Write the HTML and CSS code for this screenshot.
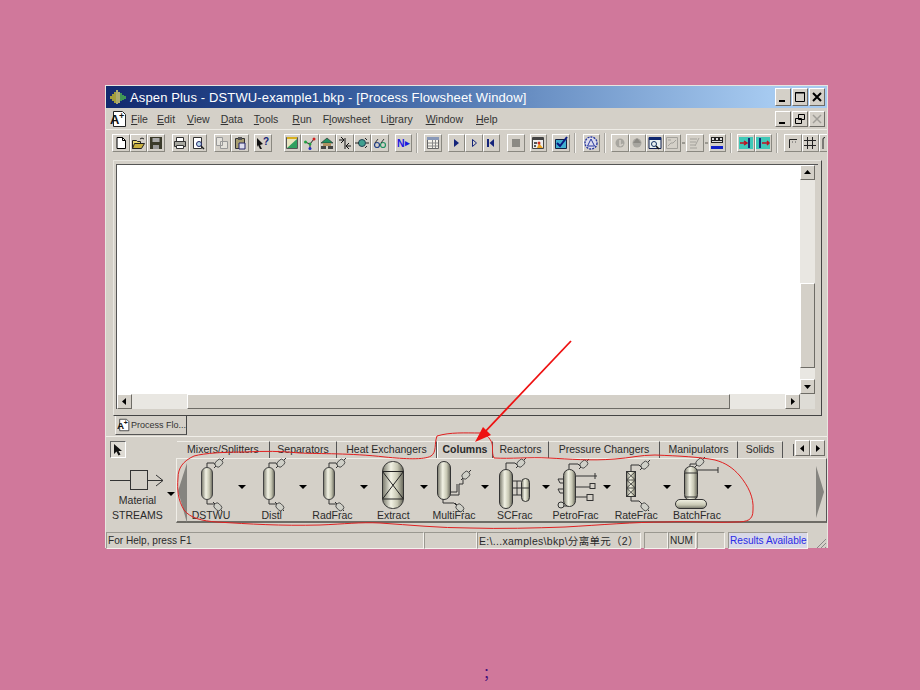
FILE: index.html
```html
<!DOCTYPE html>
<html lang="en">
<head>
<meta charset="utf-8">
<title>Aspen Plus</title>
<link rel="stylesheet" href="styles.css">
</head>
<body>
<svg class="sprite" aria-hidden="true">
  <defs>
    <linearGradient id="metal" x1="0" x2="1" y1="0" y2="0">
      <stop offset="0" stop-color="#77776a"/>
      <stop offset=".4" stop-color="#f2f2e4"/>
      <stop offset=".7" stop-color="#c8c8b4"/>
      <stop offset="1" stop-color="#66665a"/>
    </linearGradient>
    <linearGradient id="metalV" x1="0" x2="0" y1="0" y2="1">
      <stop offset="0" stop-color="#f2f2e4"/>
      <stop offset=".6" stop-color="#c8c8b4"/>
      <stop offset="1" stop-color="#77776a"/>
    </linearGradient>
    <g id="nozUp"><path d="M-2 2L8 -8" class="pipe"/><rect x="0" y="-3" width="8" height="6" rx="2.500" transform="rotate(-45)" fill="#d0d0c8" stroke="#444" stroke-width=".9"/></g>
    <g id="nozDown"><path d="M-2 -2L7 7" class="pipe"/><rect x="0" y="-3" width="8" height="6" rx="2.500" transform="rotate(45)" fill="#d0d0c8" stroke="#444" stroke-width=".9"/></g>
    <g id="column">
      <path d="M18 9V4H25L27 7M18 40V45H25L27 46" class="pipe"/>
      <rect x="12.500" y="8.500" width="11" height="32" rx="5.500" fill="url(#metal)" stroke="#444"/>
      <use href="#nozUp" x="27" y="7"/>
      <use href="#nozDown" x="26" y="45"/>
    </g>
    <path id="caret" d="M0 0H8L4 4Z" fill="#000"/>
  </defs>
</svg>

<main class="window">
  <header class="titlebar">
    <svg class="app-icon" width="16" height="16" viewBox="0 0 16 16"><path d="M1 7v3M3 5v7M5 3v11" stroke="#f0dc20" stroke-width="1.300"/><path d="M7 1v14M9 3v11" stroke="#fff070" stroke-width="1.300"/><path d="M11 4v8M13 6v5M15 7v3" stroke="#58d048" stroke-width="1.300"/></svg>
    <span class="title-text">Aspen Plus - DSTWU-example1.bkp - [Process Flowsheet Window]</span>
    <div class="win-btns">
      <span class="win-btn"><svg width="14" height="14" viewBox="0 0 14 14"><path d="M3 11h6" stroke="#000" stroke-width="2"/></svg></span>
      <span class="win-btn"><svg width="14" height="14" viewBox="0 0 14 14"><path d="M2.500 2.500h9v9h-9z M2 3h10" fill="none" stroke="#000"/></svg></span>
      <span class="win-btn"><svg width="14" height="14" viewBox="0 0 14 14"><path d="M3 3l8 8M11 3l-8 8" stroke="#000" stroke-width="2"/></svg></span>
    </div>
  </header>

  <nav class="menubar">
    <svg class="doc-icon" width="17" height="18" viewBox="0 0 17 18"><path d="M3.500 1.500h9l3 3v12h-12z" fill="#fff" stroke="#222"/><text x="0" y="14" class="doc-a">A</text><text x="9" y="9" class="doc-plus">+</text></svg>
    <span class="menu-item m-file"><u>F</u>ile</span>
    <span class="menu-item m-edit"><u>E</u>dit</span>
    <span class="menu-item m-view"><u>V</u>iew</span>
    <span class="menu-item m-data"><u>D</u>ata</span>
    <span class="menu-item m-tools"><u>T</u>ools</span>
    <span class="menu-item m-run"><u>R</u>un</span>
    <span class="menu-item m-flow">F<u>l</u>owsheet</span>
    <span class="menu-item m-lib">Li<u>b</u>rary</span>
    <span class="menu-item m-win"><u>W</u>indow</span>
    <span class="menu-item m-help"><u>H</u>elp</span>
    <div class="win-btns small">
      <span class="win-btn"><svg width="14" height="14" viewBox="0 0 14 14"><path d="M3 11h6" stroke="#000" stroke-width="2"/></svg></span>
      <span class="win-btn"><svg width="14" height="14" viewBox="0 0 14 14"><path d="M5.500 2.500h6v5h-6zM2.500 6.500h6v5h-6z" fill="#d4d0c8" stroke="#000"/></svg></span>
      <span class="win-btn"><svg width="14" height="14" viewBox="0 0 14 14"><path d="M3 3l8 8M11 3l-8 8" stroke="#a09e98" stroke-width="1.500"/></svg></span>
    </div>
  </nav>

  <div class="toolbar">
    <div class="tb-group g1">
      <span class="tb"><svg viewBox="0 0 14 14"><path d="M3 1.500h5.500l3 3v8H3z" fill="#fff" stroke="#000"/><path d="M8.500 1.500v3h3" fill="none" stroke="#000"/></svg></span>
      <span class="tb"><svg viewBox="0 0 14 14"><path d="M1.500 12.500v-8h4l1 1h3v2" fill="#e8d870" stroke="#222"/><path d="M1.500 12.500l2-5h10l-3 5z" fill="#c8b040" stroke="#222"/><path d="M9 3q2-2 4 0" fill="none" stroke="#222"/></svg></span>
      <span class="tb"><svg viewBox="0 0 14 14"><path d="M1 1h12v12H1z" fill="#3a3a2a"/><path d="M3.500 2h7v4h-7z" fill="#aaa"/><path d="M4 9h6v4H4z" fill="#999"/></svg></span>
    </div>
    <div class="tb-group g2">
      <span class="tb"><svg viewBox="0 0 14 14"><path d="M3.500 1.500h7v4h-7z" fill="#fff" stroke="#333"/><path d="M1.500 5.500h11v5h-11z" fill="#a8a8a0" stroke="#333"/><path d="M3.500 9.500h7v3h-7z" fill="#fff" stroke="#333"/></svg></span>
      <span class="tb"><svg viewBox="0 0 14 14"><path d="M2.500 1.500h8v11h-8z" fill="#fff" stroke="#333"/><circle cx="8" cy="8" r="2.500" fill="#bde" stroke="#226"/><path d="M10 10l3 3" stroke="#222" stroke-width="1.500"/></svg></span>
    </div>
    <div class="tb-group g3">
      <span class="tb"><svg viewBox="0 0 14 14"><path d="M1.500 1.500h6v8h-6zM5.500 5.500h7v7h-7z" fill="#e4e2dc" stroke="#999"/></svg></span>
      <span class="tb"><svg viewBox="0 0 14 14"><path d="M2.500 2.500h9v10h-9z" fill="#a89e70" stroke="#333"/><path d="M5 1h4v3H5z" fill="#555"/><path d="M6 7h6v6H6z" fill="#dde" stroke="#226"/></svg></span>
    </div>
    <div class="tb-group g4">
      <span class="tb"><svg viewBox="0 0 14 14"><path d="M1 2l6 6-3 1 2 4-2 0-2-4-1 2z" fill="#111"/><text x="7" y="9" class="q">?</text></svg></span>
    </div>
    <div class="tb-group g5">
      <span class="tb"><svg viewBox="0 0 14 14"><path d="M1.500 1.500h11v11h-11z" fill="#e8e4c0" stroke="#555"/><path d="M2 12L12 3v9z" fill="#30a060"/><path d="M2 1h10v2H2z" fill="#d8b020"/></svg></span>
      <span class="tb"><svg viewBox="0 0 14 14"><path d="M2 6l5 2 4-5M7 8v5" stroke="#222" fill="none"/><circle cx="2.500" cy="6" r="1.500" fill="#20a040"/><circle cx="11" cy="3" r="1.500" fill="#d02020"/><circle cx="7" cy="8" r="1.500" fill="#20a040"/><circle cx="7" cy="12.500" r="1.500" fill="#2030c0"/></svg></span>
      <span class="tb"><svg viewBox="0 0 14 14"><path d="M1 7l6-5 6 5z" fill="#209060" stroke="#222" stroke-width=".6"/><path d="M3 7h8v3H3z" fill="#b09060"/><path d="M1 10h5v3H1zM8 10h5v3H8z" fill="#444"/></svg></span>
      <span class="tb"><svg viewBox="0 0 14 14"><path d="M1 4h5M3 1l3 3-3 3M8 10h5M11 7l-3 3 3 3M7 2v11" fill="none" stroke="#111"/></svg></span>
      <span class="tb"><svg viewBox="0 0 14 14"><circle cx="7" cy="7" r="3.500" fill="#40a090" stroke="#245"/><path d="M0 7h4M10 2l2 2M10 12l2-2M11 7h3" stroke="#222"/></svg></span>
      <span class="tb"><svg viewBox="0 0 14 14"><circle cx="4" cy="9" r="2.500" fill="none" stroke="#22408a" stroke-width="1.200"/><circle cx="10" cy="9" r="2.500" fill="none" stroke="#209060" stroke-width="1.200"/><path d="M2 7l3-4M8 7l3-4" stroke="#333"/></svg></span>
    </div>
    <div class="tb-group g6">
      <span class="tb tb-text">N<span class="tb-tri">&#9656;</span></span>
    </div>
    <i class="tb-sep s1"></i>
    <div class="tb-group g7">
      <span class="tb"><svg viewBox="0 0 14 14"><path d="M1.500 1.500h11v11h-11z" fill="#f4f2ea" stroke="#666"/><path d="M1 1h12v3H1z" fill="#8898b8"/><path d="M6.500 4v8M9.500 4v8M2 7h10M2 10h10" stroke="#888"/></svg></span>
    </div>
    <div class="tb-group g8">
      <span class="tb"><svg viewBox="0 0 14 14"><path d="M5 3l5 4-5 4z" fill="#14247a"/></svg></span>
      <span class="tb"><svg viewBox="0 0 14 14"><path d="M5.500 3.500l4 3.500-4 3.500z" fill="none" stroke="#14247a"/></svg></span>
      <span class="tb"><svg viewBox="0 0 14 14"><path d="M4 3v8" stroke="#14247a" stroke-width="2"/><path d="M10 3L5.500 7l4.500 4z" fill="#14247a"/></svg></span>
    </div>
    <div class="tb-group g9">
      <span class="tb"><svg viewBox="0 0 14 14"><path d="M3 3h8v8H3z" fill="#8c8a84"/></svg></span>
    </div>
    <div class="tb-group g10">
      <span class="tb"><svg viewBox="0 0 14 14"><path d="M1.500 1.500h11v11h-11z" fill="#eee" stroke="#444"/><path d="M2 2h10v2H2z" fill="#444"/><path d="M8 7l4 5H6z" fill="#e8a020"/><path d="M3 6h3v2H3zM3 9h2v2H3z" fill="#555"/><circle cx="8" cy="7" r="1.500" fill="#d03020"/></svg></span>
    </div>
    <div class="tb-group g11">
      <span class="tb"><svg viewBox="0 0 14 14"><path d="M1.500 3.500h11v9h-11z" fill="#40b0d0" stroke="#124"/><path d="M3 7l3 3 7-9" fill="none" stroke="#0a1a80" stroke-width="2"/></svg></span>
    </div>
    <i class="tb-sep s2"></i>
    <div class="tb-group g12">
      <span class="tb"><svg viewBox="0 0 14 14"><circle cx="7" cy="7" r="6" fill="#dde" stroke="#2838a0" stroke-dasharray="2 1" stroke-width="1.400"/><path d="M7 3l3.500 7h-7z" fill="none" stroke="#2838a0"/></svg></span>
    </div>
    <i class="tb-sep s3"></i>
    <div class="tb-group g13">
      <span class="tb"><svg viewBox="0 0 14 14"><circle cx="7" cy="7" r="4.500" fill="#a8a6a0"/><path d="M7 4v6M7 10l3-2" stroke="#d4d0c8" stroke-width="1.500"/></svg></span>
      <span class="tb"><svg viewBox="0 0 14 14"><circle cx="7" cy="7" r="4.500" fill="#a8a6a0"/><path d="M7 2l4 5H3z" fill="#8c8a84"/></svg></span>
      <span class="tb"><svg viewBox="0 0 14 14"><path d="M1 1.500h12v11H1z" fill="#e8f0f0" stroke="#102050"/><path d="M1 1h12v3H1z" fill="#102870"/><circle cx="6" cy="8" r="2.500" fill="none" stroke="#103060"/><path d="M8 10l3 3" stroke="#111" stroke-width="1.500"/></svg></span>
      <span class="tb tb-split"><svg viewBox="0 0 14 14"><path d="M1.500 1.500h11v11h-11z" fill="none" stroke="#a4a29c"/><path d="M3 10l3-3h2l3-3M3 4h3" stroke="#a4a29c" fill="none"/></svg><i class="mini-caret"></i></span>
      <span class="tb tb-split"><svg viewBox="0 0 14 14"><path d="M2 3h7M2 6h6M2 9h5M2 12h7M11 2L7 10" stroke="#a4a29c" fill="none"/></svg><i class="mini-caret"></i></span>
      <span class="tb"><svg viewBox="0 0 14 14"><path d="M1 1h12v6H1z" fill="#222"/><path d="M2 2h2v2H2zM6 2h2v2H6zM10 2h2v2h-2zM2 5h10v1H2z" fill="#ddd"/><path d="M1 10h12v3H1z" fill="#1020c8"/></svg></span>
    </div>
    <i class="tb-sep s4"></i>
    <div class="tb-group g14">
      <span class="tb"><svg viewBox="0 0 14 14"><path d="M0 1h14v12H0z" fill="#40c8b8"/><path d="M1 7h6M5 5l3 2-3 2" stroke="#c01020" fill="none" stroke-width="1.500"/><path d="M10 2v10" stroke="#14307a" stroke-width="2"/></svg></span>
      <span class="tb"><svg viewBox="0 0 14 14"><path d="M0 1h14v12H0z" fill="#40c8b8"/><path d="M6 7h7M11 5l2 2-2 2" stroke="#c01020" fill="none" stroke-width="1.500"/><path d="M4 2v10" stroke="#14307a" stroke-width="2"/></svg></span>
    </div>
    <i class="tb-sep s5"></i>
    <div class="tb-group g15">
      <span class="tb"><svg viewBox="0 0 14 14"><path d="M3.500 12V3.500H11" fill="none" stroke="#222"/><path d="M6 6h1M9 6h1" stroke="#555"/></svg></span>
      <span class="tb"><svg viewBox="0 0 14 14"><path d="M4.500 1v12M9.500 1v12M1 4.500h12M1 9.500h12" stroke="#222"/></svg></span>
      <span class="tb tb-clip"><svg viewBox="0 0 14 14"><path d="M6 13V3q0-1.500 2-1.500" fill="none" stroke="#222"/></svg></span>
    </div>
  </div>

  <section class="mdi">
    <div class="child-frame">
      <div class="child-inner">
        <div class="canvas"></div>
        <div class="vscroll">
          <span class="sb-btn"><svg width="9" height="9" viewBox="0 0 9 9"><path d="M4.500 2L8 6H1z"/></svg></span>
          <span class="track v-top"></span>
          <span class="thumb v-thumb"></span>
          <span class="track v-bot"></span>
          <span class="sb-btn"><svg width="9" height="9" viewBox="0 0 9 9"><path d="M4.500 7L8 3H1z"/></svg></span>
        </div>
        <div class="hscroll">
          <span class="sb-btn"><svg width="9" height="9" viewBox="0 0 9 9"><path d="M2 4.500L6 1v7z"/></svg></span>
          <span class="track h-left"></span>
          <span class="thumb h-thumb"></span>
          <span class="track h-right"></span>
          <span class="sb-btn"><svg width="9" height="9" viewBox="0 0 9 9"><path d="M7 4.500L3 1v7z"/></svg></span>
        </div>
        <div class="corner"></div>
      </div>
    </div>
    <div class="doc-tabs">
      <div class="doc-tab">
        <svg width="15" height="16" viewBox="0 0 17 18"><path d="M3.500 1.500h9l3 3v12h-12z" fill="#fff" stroke="#222"/><text x="0" y="14" class="doc-a">A</text><text x="9" y="9" class="doc-plus">+</text></svg>
        <span>Process Flo...</span>
      </div>
    </div>
  </section>

  <section class="palette">
    <div class="palette-left">
      <span class="select-btn"><svg width="12" height="13" viewBox="0 0 12 13"><path d="M2 1v10l2.500-2.500 2 4 2-1-2-3.500H10z" fill="#111"/></svg></span>
      <div class="stream-row">
        <div class="stream-item">
          <svg width="54" height="22" viewBox="0 0 54 22"><path d="M0 11.500H20M37 11.500H53M46 6l7 5.500-7 5.500" fill="none" stroke="#333"/><rect x="20.500" y="1.500" width="17" height="19" fill="none" stroke="#333"/></svg>
          <span class="stream-label">Material<br>STREAMS</span>
        </div>
        <svg class="stream-caret" width="8" height="4" viewBox="0 0 8 4"><use href="#caret"/></svg>
      </div>
    </div>

    <div class="palette-right">
      <div class="pal-tabs">
        <span class="pal-tab">Mixers/Splitters</span>
        <span class="pal-tab">Separators</span>
        <span class="pal-tab">Heat Exchangers</span>
        <span class="pal-tab active">Columns</span>
        <span class="pal-tab">Reactors</span>
        <span class="pal-tab">Pressure Changers</span>
        <span class="pal-tab">Manipulators</span>
        <span class="pal-tab">Solids</span>
        <span class="pal-more">
          <span class="pal-cut"></span>
          <span class="sb-btn tab-btn"><svg width="9" height="9" viewBox="0 0 9 9"><path d="M2 4.500L6 1v7z"/></svg></span>
          <span class="sb-btn tab-btn"><svg width="9" height="9" viewBox="0 0 9 9"><path d="M7 4.500L3 1v7z"/></svg></span>
        </span>
      </div>
      <div class="pal-body">
        <svg class="pal-arrow left" width="9" height="60" viewBox="0 0 9 60"><path d="M9 0V60L0 28Z" fill="#85847f"/></svg>
        <div class="models">
          <div class="model">
            <div class="model-main"><svg class="model-icon" viewBox="0 0 44 50"><use href="#column"/></svg><span class="model-label">DSTWU</span></div>
            <svg class="caret" width="8" height="4" viewBox="0 0 8 4"><use href="#caret"/></svg>
          </div>
          <div class="model">
            <div class="model-main"><svg class="model-icon" viewBox="0 0 44 50"><use href="#column" x="1"/></svg><span class="model-label">Distl</span></div>
            <svg class="caret" width="8" height="4" viewBox="0 0 8 4"><use href="#caret"/></svg>
          </div>
          <div class="model">
            <div class="model-main"><svg class="model-icon" viewBox="0 0 44 50"><use href="#column"/></svg><span class="model-label">RadFrac</span></div>
            <svg class="caret" width="8" height="4" viewBox="0 0 8 4"><use href="#caret"/></svg>
          </div>
          <div class="model">
            <div class="model-main"><svg class="model-icon" viewBox="0 0 44 50"><rect x="11.500" y="2.500" width="21" height="47" rx="10" fill="url(#metal)" stroke="#333"/><path d="M11.500 12.500h21M11.500 40h21M11.500 12.500L32.500 40M32.500 12.500L11.500 40" stroke="#222" fill="none"/></svg><span class="model-label">Extract</span></div>
            <svg class="caret" width="8" height="4" viewBox="0 0 8 4"><use href="#caret"/></svg>
          </div>
          <div class="model">
            <div class="model-main"><svg class="model-icon" viewBox="0 0 44 50"><path d="M18 36H27V25H31V20M18 33H25V25M11 40V44H22L25 47" class="pipe"/><rect x="5.500" y="2.500" width="13" height="38" rx="6.500" fill="url(#metal)" stroke="#333"/><use href="#nozUp" x="31" y="19"/><use href="#nozDown" x="25" y="46"/></svg><span class="model-label">MultiFrac</span></div>
            <svg class="caret" width="8" height="4" viewBox="0 0 8 4"><use href="#caret"/></svg>
          </div>
          <div class="model">
            <div class="model-main"><svg class="model-icon" viewBox="0 0 44 50"><path d="M13 10V4H22L25 7M19 22H28M19 29H28M19 36H28M24 22V36" class="pipe"/><rect x="6.500" y="10.500" width="13" height="39" rx="6.500" fill="url(#metal)" stroke="#333"/><rect x="28.500" y="19.500" width="8" height="23" rx="4" fill="url(#metal)" stroke="#333"/><path d="M28.500 29h8" class="pipe"/><use href="#nozUp" x="25" y="7"/></svg><span class="model-label">SCFrac</span></div>
            <svg class="caret" width="8" height="4" viewBox="0 0 8 4"><use href="#caret"/></svg>
          </div>
          <div class="model">
            <div class="model-main"><svg class="model-icon" viewBox="0 0 44 50"><path d="M15 10V5H24L27 8M21 17H43M41 14V20M21 28H36M21 38H33M9 20H4L6 24H9M9 30H4L6 34H9M15 47H10" class="pipe"/><rect x="36" y="24.500" width="5" height="5" fill="none" stroke="#333"/><rect x="33" y="35.500" width="6" height="6" fill="none" stroke="#333"/><circle cx="7" cy="46" r="3" fill="#d8d8d0" stroke="#333"/><rect x="9.500" y="10.500" width="12" height="37" rx="6" fill="url(#metal)" stroke="#333"/><use href="#nozUp" x="27" y="8"/></svg><span class="model-label">PetroFrac</span></div>
            <svg class="caret" width="8" height="4" viewBox="0 0 8 4"><use href="#caret"/></svg>
          </div>
          <div class="model">
            <div class="model-main"><svg class="model-icon" viewBox="0 0 44 50"><path d="M17 12V6H25L28 9M17 37V42H25L28 45" class="pipe"/><rect x="12.500" y="12.500" width="9" height="25" fill="url(#metal)" stroke="#333"/><path d="M12.500 21h9M12.500 29h9M12.500 12.500l9 8.500M21.500 12.500l-9 8.500M12.500 21l9 8M21.500 21l-9 8M12.500 29l9 8.500M21.500 29l-9 8.500" class="pipe thin"/><use href="#nozUp" x="28" y="9"/><use href="#nozDown" x="28" y="45"/></svg><span class="model-label">RateFrac</span></div>
            <svg class="caret" width="8" height="4" viewBox="0 0 8 4"><use href="#caret"/></svg>
          </div>
          <div class="model">
            <div class="model-main"><svg class="model-icon" viewBox="0 0 44 50"><path d="M15 7V5H21M16 11H43M43 8V14" class="pipe"/><rect x="9.500" y="7.500" width="13" height="34" rx="6" fill="url(#metal)" stroke="#333"/><path d="M9.500 14h13M9.500 38h13" class="pipe"/><rect x="0.500" y="40.500" width="31" height="9" rx="4.500" fill="url(#metalV)" stroke="#333"/><use href="#nozUp" x="22" y="6"/></svg><span class="model-label">BatchFrac</span></div>
            <svg class="caret" width="8" height="4" viewBox="0 0 8 4"><use href="#caret"/></svg>
          </div>
        </div>
        <svg class="pal-arrow right" width="8" height="52" viewBox="0 0 8 52"><path d="M0 0V52L8 26Z" fill="#85847f"/></svg>
      </div>
    </div>
  </section>

  <footer class="statusbar">
    <span class="panel p1">For Help, press F1</span>
    <span class="panel p2"></span>
    <span class="panel p3">E:\...xamples\bkp\分离单元（2）</span>
    <span class="panel p4"></span>
    <span class="panel p5">NUM</span>
    <span class="panel p6"></span>
    <span class="panel p7">Results Available</span>
    <svg class="grip" width="12" height="12" viewBox="0 0 12 12"><path d="M11 2L2 11M11 6L6 11M11 10L10 11" stroke="#888"/></svg>
  </footer>

  <svg class="annotation" width="723" height="463" viewBox="105 85 723 463" aria-hidden="true">
    <path d="M437 436C434 444 437 452 431 456C424 460 405 459 385 457C350 453 320 454 300 453C280 451 265 451 245 452C225 452 205 453 194 456C183 461 178 468 178 478C177 490 178 500 184 510C190 518 202 521 217 522C250 524 280 526 320 525C345 524 360 522 380 523C410 525 440 528 470 528C500 529 535 528 565 527C600 525 635 522 665 522C690 521 715 523 735 522C748 522 753 520 753 510C754 497 748 486 740 476C733 468 726 463 715 460C700 457 680 456 655 455C640 455 630 458 615 459C590 461 570 459 548 458C530 457 510 459 494 458C491 452 494 446 491 441C488 436 486 434 480 433C465 433 450 432 437 436" fill="none" stroke="#e02020"/>
    <path d="M571 341L482 435" fill="none" stroke="#ee1111" stroke-width="1.800"/>
    <path d="M475 442L483 427L491 435Z" fill="#ee1111"/>
  </svg>
</main>

<p class="note">；</p>
</body>
</html>
```

FILE: styles.css
```css
* { box-sizing: border-box; }

html, body { margin: 0; height: 100%; }

body {
  background: #d0789b;
  font-family: "Liberation Sans", Arial, sans-serif;
  color: #2a2a2a;
  padding-top: 85px;
  overflow: hidden;
}

.sprite { position: absolute; width: 0; height: 0; }

.pipe { fill: none; stroke: #333; stroke-width: 1; }
.pipe.thin { stroke-width: .8; }

.window {
  position: relative;
  width: 723px;
  height: 463px;
  margin-left: 105px;
  background: #d4d0c8;
  border: 1px solid #e8e6e0;
  border-bottom: 0;
  display: flex;
  flex-direction: column;
}

.titlebar {
  height: 22px;
  flex: none;
  display: flex;
  align-items: center;
  padding-left: 4px;
  background: linear-gradient(90deg, #12296e 0%, #2f5598 30%, #6a90c4 60%, #a6caf0 92%);
}

.app-icon { margin-right: 4px; flex: none; }

.title-text {
  color: #fff;
  font-size: 13px;
  letter-spacing: .13px;
  white-space: nowrap;
}

.win-btns {
  margin-left: auto;
  margin-right: 2px;
  display: flex;
  gap: 1px;
}

.win-btn {
  width: 16px;
  height: 18px;
  display: flex;
  align-items: center;
  justify-content: center;
  background: #d4d0c8;
  border: 1px solid;
  border-color: #fff #6e6c66 #6e6c66 #fff;
}

.menubar {
  height: 21px;
  flex: none;
  display: flex;
  align-items: center;
  padding-left: 4px;
  font-size: 10.5px;
  color: #333;
}

.doc-icon { flex: none; }
.doc-a { font: bold 13px "Liberation Sans", sans-serif; fill: #111; }
.doc-plus { font: bold 9px "Liberation Sans", sans-serif; fill: #111; }

.menu-item { white-space: nowrap; }
.m-file { margin-left: 4px; }
.m-edit { margin-left: 9px; }
.m-view { margin-left: 12px; }
.m-data { margin-left: 11px; }
.m-tools { margin-left: 11px; }
.m-run { margin-left: 14px; }
.m-flow { margin-left: 11px; }
.m-lib { margin-left: 10px; }
.m-win { margin-left: 13px; }
.m-help { margin-left: 13px; }

.win-btns.small .win-btn { height: 16px; }

.toolbar {
  height: 26px;
  flex: none;
  display: flex;
  align-items: center;
  padding-left: 6px;
  border-top: 1px solid #eeece6;
  overflow: hidden;
}

.tb-group { display: flex; flex: none; }
.g2 { margin-left: 7px; }
.g3 { margin-left: 7px; }
.g4 { margin-left: 5.5px; }
.g5 { margin-left: 12px; }
.g6 { margin-left: 6px; }
.g7 { margin-left: 6px; }
.g8 { margin-left: 6px; }
.g9 { margin-left: 7px; }
.g10 { margin-left: 5px; }
.g11 { margin-left: 5px; }
.g12 { margin-left: 7px; }
.g13 { margin-left: 5px; }
.g14 { margin-left: 5px; }
.g15 { margin-left: 6px; }

.tb {
  width: 17.5px;
  height: 18px;
  display: flex;
  align-items: center;
  justify-content: center;
  border: 1px solid;
  border-color: #fff #8a8880 #8a8880 #fff;
}

.tb svg { width: 14px; height: 14px; flex: none; }

.q { font: bold 10px "Liberation Sans", sans-serif; fill: #14247a; }

.tb-text {
  font: bold 10.5px "Liberation Sans", sans-serif;
  color: #1a1ae0;
  gap: 0;
}

.tb-tri { font-size: 9px; color: #1a1ae0; }

.tb-split { position: relative; margin-right: 5px; }

.mini-caret {
  position: absolute;
  right: -5px;
  top: 7px;
  width: 3px;
  height: 2px;
  background: #9a9890;
}

.tb-clip { width: 9px; border-right: 0; overflow: hidden; }

.tb-sep {
  width: 2px;
  height: 20px;
  margin-left: 4px;
  border-left: 1px solid #a8a6a0;
  border-right: 1px solid #f4f2ee;
  flex: none;
}

.mdi {
  height: 281px;
  flex: none;
  display: flex;
  flex-direction: column;
  padding: 5px 5px 0 7px;
}

.child-frame {
  height: 256px;
  flex: none;
  border: 1px solid;
  border-color: #e8e6e0 #444 #444 #e8e6e0;
  padding: 3px 3px 6px 2px;
}

.child-inner {
  height: 100%;
  display: grid;
  grid-template-columns: 683px 15px;
  grid-template-rows: 229px 15px;
  border-top: 1px solid #555;
  border-left: 1px solid #555;
}

.canvas { background: #fff; }

.vscroll { display: flex; flex-direction: column; }
.hscroll { display: flex; }
.corner { background: #dedcd6; }

.sb-btn {
  width: 15px;
  height: 15px;
  flex: none;
  display: flex;
  align-items: center;
  justify-content: center;
  background: #d4d0c8;
  border: 1px solid;
  border-color: #fff #6e6c66 #6e6c66 #fff;
}

.track { background: #e9e7e2; flex: none; }
.thumb {
  background: #d4d0c8;
  flex: none;
  border: 1px solid;
  border-color: #fff #6e6c66 #6e6c66 #fff;
}

.v-top { height: 103px; }
.v-thumb { height: 85px; }
.v-bot { height: 11px; }

.h-left { width: 55px; }
.h-thumb { width: 543px; }
.h-right { width: 55px; }

.doc-tabs {
  height: 20px;
  flex: none;
  padding-left: 2px;
}

.doc-tab {
  width: 72px;
  height: 19px;
  display: flex;
  align-items: center;
  gap: 1px;
  padding-left: 1px;
  font-size: 9px;
  color: #333;
  white-space: nowrap;
  border: 1px solid;
  border-color: transparent #444 #555 #f4f2ee;
  border-top: 0;
}

.palette {
  height: 94px;
  flex: none;
  display: flex;
  border-top: 1px solid #f0eee8;
}

.palette-left {
  width: 70px;
  flex: none;
  padding: 4px 0 0 4px;
  display: flex;
  flex-direction: column;
  align-items: flex-start;
}

.select-btn {
  width: 16px;
  height: 17px;
  display: flex;
  align-items: center;
  justify-content: center;
  background: #dedbd4;
  border: 1px solid;
  border-color: #666 #fff #fff #666;
}

.stream-row {
  display: flex;
  align-items: center;
  margin-top: 11px;
}

.stream-item {
  width: 54px;
  display: flex;
  flex-direction: column;
  align-items: center;
  gap: 0;
}

.stream-label {
  font-size: 10.5px;
  line-height: 15px;
  text-align: center;
  margin-top: 2px;
  margin-left: 1px;
}

.stream-caret { margin-left: 3px; margin-bottom: 4px; flex: none; }

.palette-right {
  flex: 1;
  display: flex;
  flex-direction: column;
  padding-top: 4px;
}

.pal-tabs {
  height: 17px;
  flex: none;
  display: grid;
  grid-template-columns: 93px 67px 100px 56px 56px 111px 78px 45px 1fr;
  padding-left: 1px;
  font-size: 10.5px;
}

.pal-tab {
  display: flex;
  align-items: center;
  justify-content: center;
  white-space: nowrap;
  padding-bottom: 2px;
  border-right: 1px solid #555;
  border-top: 1px solid #f0eee8;
}

.pal-tab.active {
  font-weight: bold;
  border-left: 1px solid #fff;
  border-right: 1px solid #555;
}

.pal-more {
  display: flex;
  align-items: flex-start;
  padding-left: 10px;
}

.pal-cut {
  width: 1px;
  height: 12px;
  margin-top: 3px;
  background: #555;
  margin-right: 1px;
}

.tab-btn { width: 15px; height: 16px; margin-top: -1px; }

.pal-body {
  height: 65px;
  flex: none;
  display: flex;
  align-items: flex-start;
  margin-right: 0;
  border-top: 1px solid #f0eee8;
  border-left: 1px solid #f0eee8;
  border-right: 1px solid #555;
  border-bottom: 2px solid #6e6c66;
}

.pal-arrow { flex: none; margin-top: 4px; }
.pal-arrow.left { margin-left: 1px; margin-right: 0; }
.pal-arrow.right { margin-left: auto; margin-right: 2px; margin-top: 7px; }

.models {
  flex: none;
  display: grid;
  grid-template-columns: repeat(9, 60.75px);
}

.model {
  display: flex;
  align-items: center;
}

.model-main {
  width: 48px;
  flex: none;
  display: flex;
  flex-direction: column;
  align-items: center;
}

.model-icon {
  width: 44px;
  height: 50px;
  overflow: visible;
  flex: none;
}

.model-label {
  font-size: 10.5px;
  line-height: 12px;
  white-space: nowrap;
}

.caret { flex: none; margin-left: 3px; margin-bottom: 7px; }

.statusbar {
  flex: 1;
  display: flex;
  align-items: stretch;
  padding-top: 2px;
  font-size: 10.1px;
  position: relative;
}

.panel {
  display: flex;
  align-items: center;
  padding-left: 1px;
  white-space: nowrap;
  border: 1px solid;
  border-color: #9a9890 #f4f2ee #f4f2ee #9a9890;
  flex: none;
}

.p1 { width: 318px; }
.p2 { width: 53px; }
.p3 { width: 164px; font-size: 10.5px; letter-spacing: .3px; font-family: "Liberation Sans", "Noto Sans CJK SC", sans-serif; }
.p4 { width: 24px; margin-left: 3px; }
.p5 { width: 28px; }
.p6 { width: 28px; margin-left: 1px; }
.p7 { width: 80px; margin-left: 3px; color: #2a2ae6; background: #d8d8e8; }

.grip { position: absolute; right: 0; bottom: 0; }

.annotation {
  position: absolute;
  left: -1px;
  top: -1px;
  pointer-events: none;
}

.note {
  margin: 114px 0 0 483px;
  font: 14px "Noto Sans CJK SC", sans-serif;
  color: #40107a;
  line-height: 20px;
}
```
